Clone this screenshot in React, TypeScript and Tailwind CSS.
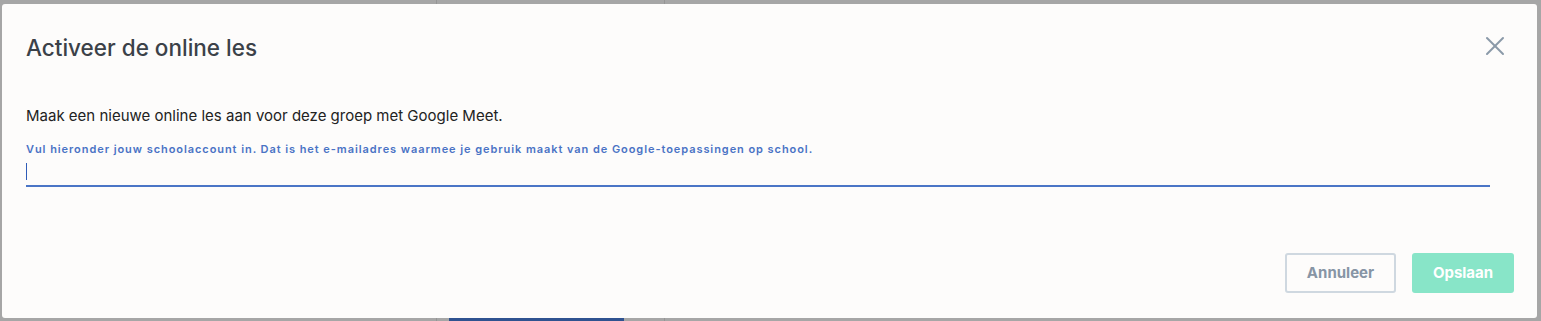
import { X } from 'lucide-react'

// ── Background page peeking through the overlay ───────────────────────────────
function PageBehind() {
  return (
    <div className="flex h-full w-full">
      <div className="w-[437px] border-r border-[#959595]" />
      <div className="relative w-[228px] border-r border-[#959595]">
        <div className="absolute bottom-0 left-[12px] h-[3px] w-[175px] bg-[#2f5290]" />
      </div>
      <div className="flex-1" />
    </div>
  )
}

// ── Modal ─────────────────────────────────────────────────────────────────────
function ActivateOnlineLessonModal() {
  return (
    <div className="flex h-full flex-col rounded-[3px] bg-[#fdfcfb] font-['Inter',_'Liberation_Sans',_sans-serif]">
      {/* Header */}
      <div className="flex items-start justify-between pl-6 pr-[26px] pt-[30px]">
        <h2 className="text-[22.5px] font-medium leading-7 text-[#3b4148]">
          Activeer de online les
        </h2>
        <button type="button" className="-mt-[4px] text-[#8a99a8]">
          <X size={32} strokeWidth={1.5} />
        </button>
      </div>

      {/* Body */}
      <div className="px-6 pt-[44px]">
        <p className="text-[15px] leading-5 text-[#222]">
          Maak een nieuwe online les aan voor deze groep met Google Meet.
        </p>
        <label className="mt-[15px] block text-[11px] font-semibold leading-4 tracking-[0.085em] text-[#4a73c5]">
          Vul hieronder jouw schoolaccount in. Dat is het e-mailadres waarmee je gebruik maakt van de Google-toepassingen op school.
        </label>
        <div className="mr-[23px] mt-[6px] flex h-[24px] items-start border-b-2 border-[#4a75c6]">
          <span className="h-[17px] w-px bg-[#2f5cb8]" />
        </div>
      </div>

      {/* Footer */}
      <div className="mt-auto flex justify-end gap-4 pb-[25px] pr-[23px]">
        <button
          type="button"
          className="h-10 w-[111px] rounded-[3px] border-2 border-[#cfd8e0] text-[15px] font-bold text-[#8795a5]"
        >
          Annuleer
        </button>
        <button
          type="button"
          className="h-10 w-[102px] rounded-[3px] bg-[#88e5c8] text-[15px] font-bold text-white"
        >
          Opslaan
        </button>
      </div>
    </div>
  )
}

export default function App() {
  return (
    <div className="relative h-[321px] w-[1541px] overflow-hidden bg-[#a6a6a6]">
      <PageBehind />
      <div className="absolute bottom-[3px] left-[2px] right-[4px] top-[4px]">
        <ActivateOnlineLessonModal />
      </div>
    </div>
  )
}
